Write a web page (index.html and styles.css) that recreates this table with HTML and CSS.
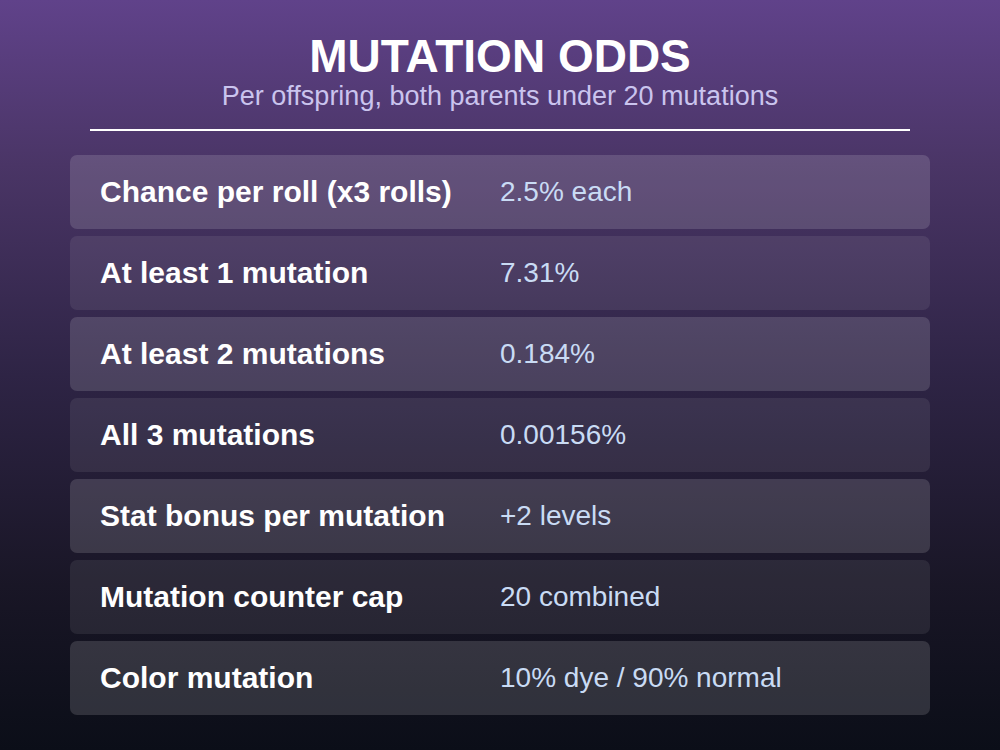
FILE: index.html
```html
<!DOCTYPE html>
<html>
<head>
<meta charset="utf-8">
<link rel="stylesheet" href="styles.css">
</head>
<body>
<div class="page">
  <header class="header">
    <h1 class="title">MUTATION ODDS</h1>
    <p class="subtitle">Per offspring, both parents under 20 mutations</p>
    <div class="rule"></div>
  </header>
  <div class="rows">
    <div class="row"><span class="label">Chance per roll (x3 rolls)</span><span class="value">2.5% each</span></div>
    <div class="row"><span class="label">At least 1 mutation</span><span class="value">7.31%</span></div>
    <div class="row"><span class="label">At least 2 mutations</span><span class="value">0.184%</span></div>
    <div class="row"><span class="label">All 3 mutations</span><span class="value">0.00156%</span></div>
    <div class="row"><span class="label">Stat bonus per mutation</span><span class="value">+2 levels</span></div>
    <div class="row"><span class="label">Mutation counter cap</span><span class="value">20 combined</span></div>
    <div class="row"><span class="label">Color mutation</span><span class="value">10% dye / 90% normal</span></div>
  </div>
</div>
</body>
</html>
```

FILE: styles.css
```css
html, body {
  margin: 0;
  padding: 0;
}
body {
  width: 1000px;
  height: 750px;
  overflow: hidden;
  font-family: "Liberation Sans", Arial, sans-serif;
  background: linear-gradient(180deg, #60428a 0%, #4a3566 22%, #2e2445 50%, #191626 78%, #0b0e18 100%);
}
.page {
  padding: 33px 70px 0;
}
.header {
  display: flex;
  flex-direction: column;
  align-items: center;
}
.title {
  margin: 0;
  font-size: 46px;
  line-height: 46px;
  font-weight: 700;
  color: #ffffff;
}
.subtitle {
  margin: 4px 0 0;
  font-size: 27px;
  line-height: 27px;
  color: #cac4ee;
}
.rule {
  align-self: stretch;
  margin: 19px 20px 0;
  height: 2px;
  background: #ffffff;
}
.rows {
  margin-top: 24px;
  display: flex;
  flex-direction: column;
  gap: 7px;
}
.row {
  height: 74px;
  display: grid;
  grid-template-columns: 400px 1fr;
  align-items: center;
  padding-left: 30px;
  border-radius: 7px;
  background: rgba(255, 255, 255, 0.14);
}
.row:nth-child(even) {
  background: rgba(255, 255, 255, 0.08);
}
.label {
  font-size: 30px;
  font-weight: 700;
  color: #ffffff;
}
.value {
  font-size: 28px;
  color: #c9dbf4;
}
```
